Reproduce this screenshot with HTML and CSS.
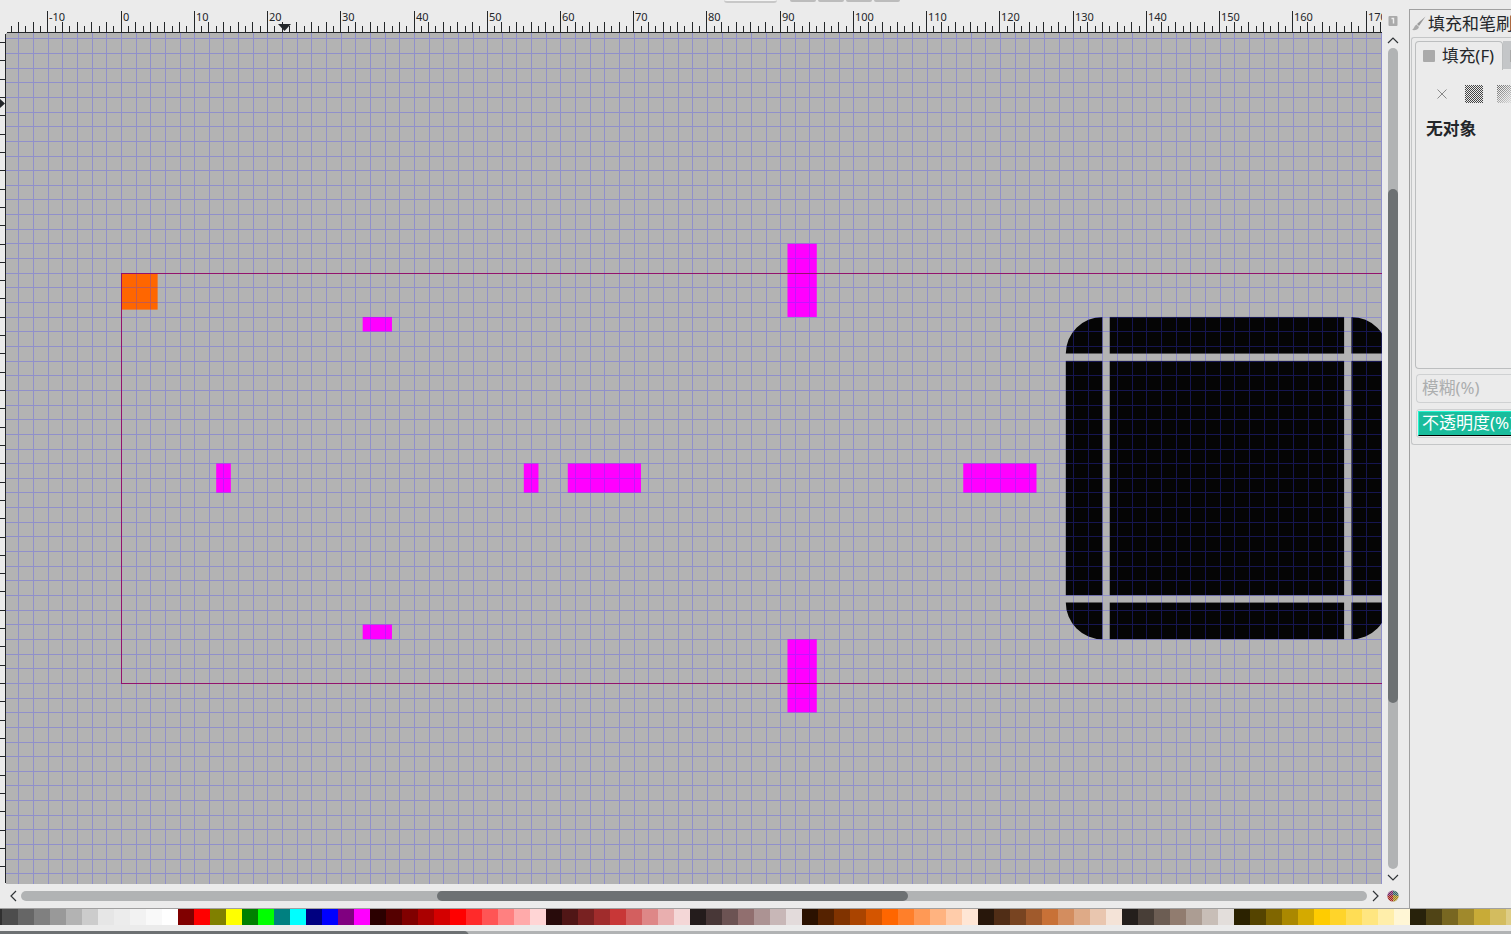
FILE: index.html
```html
<!DOCTYPE html>
<html lang="zh-CN">
<head>
<meta charset="utf-8">
<title>Editor</title>
<link rel="stylesheet" href="styles.css">
</head>
<body>
<div class="app">
  <div class="workspace">
    <main class="editor">
      <div class="toolbar-edge"><i class="entry"></i><i class="btn b1"></i><i class="btn"></i><i class="btn"></i><i class="btn"></i></div>
      <svg class="ruler-top" width="1382" height="24" id="rulerX"></svg>
      <div class="view">
        <svg class="ruler-left" width="6" height="851" id="rulerY"></svg>
        <svg class="canvas" width="1376" height="851" viewBox="6 33 1376 851">
          <rect x="6" y="33" width="1376" height="851" fill="#b3b3b3"/>
          <g id="shapes" transform="translate(121 273) scale(7.324)"></g>
          <path class="page" d="M1382 273.5H121.5V683.5H1382"/>
          <g id="grid" shape-rendering="crispEdges"></g>
        </svg>
      </div>
      <div class="hscroll">
        <svg width="8" height="12" class="arrow"><path d="M7 1L2 6L7 11"/></svg>
        <div class="htrack"><div class="hthumb"></div></div>
        <svg width="8" height="12" class="arrow"><path d="M1 1L6 6L1 11"/></svg>
      </div>
    </main>
    <div class="vscroll">
      <svg class="lock" width="10" height="10"><rect x=".5" y="0" width="9" height="10" rx="1" fill="#aaa"/><path d="M3.5 2.5H5.5V7.5" stroke="#eee" stroke-width="1.4" fill="none"/></svg>
      <svg width="12" height="8" class="arrow"><path d="M1 7L6 2L11 7"/></svg>
      <div class="vtrack"><div class="vthumb"></div></div>
      <svg width="12" height="8" class="arrow"><path d="M1 2L6 7L11 2"/></svg>
      <svg class="cms" width="12" height="12"><defs><clipPath id="disc"><circle cx="6" cy="6" r="5.6"/></clipPath><pattern id="mesh" width="2" height="2" patternUnits="userSpaceOnUse"><path d="M0 0h1v1H0zM1 1h1v1H1z" fill="#fff" opacity=".45"/></pattern></defs><g clip-path="url(#disc)"><path d="M0 0H6V6H0z" fill="#702060"/><path d="M6 0H12V6H6z" fill="#306060"/><path d="M0 6L6 5V12H0z" fill="#a02018"/><path d="M6 5L12 6V12H6z" fill="#a08010"/><path d="M0 0H12V12H0z" fill="url(#mesh)"/></g></svg>
    </div>
    <aside class="dock">
      <div class="dock-title"><svg width="14" height="15"><path d="M13.5 .5L5 8L7 10Z" fill="#999"/><path d="M4.5 8.5L7 11C6 14 3 14.5 0 14C2 13 2 10 4.5 8.5Z" fill="#aaa"/></svg><span>填充和笔刷(F)</span></div>
      <div class="dock-body">
        <div class="tabs"><div class="tab"><i></i><span>填充(F)</span></div><div class="tab-next"><i></i></div></div>
        <div class="panel">
          <div class="paints">
            <svg width="10" height="10"><path d="M.5 .5L9.5 9.5M9.5 .5L.5 9.5" stroke="#888"/></svg>
            <svg width="18" height="18"><defs><pattern id="dots" width="2" height="2" patternUnits="userSpaceOnUse"><path d="M0 0h1v1H0zM1 1h1v1H1z" fill="#444"/></pattern></defs><path d="M0 0H18V18H0z" fill="url(#dots)"/></svg>
            <svg width="18" height="18"><defs><linearGradient id="fade" x2="1" y2="1"><stop stop-color="#ebebeb" stop-opacity=".2"/><stop offset="1" stop-color="#ebebeb"/></linearGradient></defs><path d="M0 0H18V18H0z" fill="url(#dots)"/><path d="M0 0H18V18H0z" fill="url(#fade)"/></svg>
          </div>
          <div class="none">无对象</div>
        </div>
        <div class="slider">模糊(%)</div>
        <div class="slider opacity"><div>不透明度(%)</div></div>
      </div>
    </aside>
  </div>
  <div class="palette" id="palette"></div>
  <div class="palette-scroll"><div></div></div>
</div>
<script src="app.js"></script>
</body>
</html>
```
FILE: styles.css
```css
* { box-sizing: border-box; }
body { margin: 0; background: #ebebeb; color: #232629; font: 16px "Noto Sans", "Noto Sans CJK SC", sans-serif; overflow: hidden; }
svg { display: block; flex: none; }
.app { width: 1511px; height: 934px; overflow: hidden; display: flex; flex-direction: column; }
.workspace { display: flex; border-bottom: 1px solid #a0a0a0; height: 909px; flex: none; }
.editor { width: 1382px; flex: none; }
.toolbar-edge { height: 9px; padding-left: 724px; display: flex; align-items: flex-start; gap: 2px; }
.toolbar-edge i { height: 2px; width: 26px; background: #bcbcbc; border-radius: 0 0 3px 3px; }
.toolbar-edge .entry { width: 53px; height: 3px; background: #f4f4f4; border-bottom: 2px solid #c8c8c8; margin-right: 11px; }
.ruler-top text { font: 11px "Noto Sans", sans-serif; fill: #232629; }
.tick { stroke: #232629; fill: none; shape-rendering: crispEdges; }
.view { display: flex; }
.grid-line { stroke: #3f3fff; stroke-opacity: .3; fill: none; }
.page { fill: none; stroke: #b8002e; shape-rendering: crispEdges; }
.hscroll { height: 24px; display: flex; align-items: center; padding-left: 9px; gap: 4px; }
.arrow path { fill: none; stroke: #303437; stroke-width: 1.2; }
.htrack { width: 1346px; height: 10px; border-radius: 5px; background: #b1b3b4; margin-right: 1px; }
.hthumb { width: 471px; height: 10px; border-radius: 5px; background: #6d7173; margin-left: 416px; }
.vscroll { width: 27px; flex: none; padding: 16px 5px 0 0; display: flex; flex-direction: column; align-items: center; }
.vscroll .lock { margin-bottom: 10px; }
.vtrack { width: 10px; height: 821px; margin: 4px 0; border-radius: 5px; background: #b1b3b4; padding-top: 141px; }
.vthumb { height: 514px; border-radius: 5px; background: #6d7173; }
.cms { margin-top: 9px; }
.dock { width: 102px; flex: none; margin-top: 9px; border-left: 1px solid #a0a0a0; border-top: 1px solid #a0a0a0; padding-left: 1px; overflow: hidden; white-space: nowrap; }
.dock-title { height: 27px; display: flex; align-items: center; gap: 2px; padding-left: 1px; font-size: 17px; }
.dock-title span { margin-bottom: 2px; }
.dock-body { height: 408px; border: 1px solid #c4c6c7; border-right: 0; border-radius: 3px 0 0 3px; padding: 3px 0 0 3px; }
.tabs { display: flex; height: 29px; }
.tab { width: 88px; flex: none; border: 1px solid #bcbebf; border-bottom: 0; border-radius: 4px 4px 0 0; display: flex; align-items: center; padding-left: 7px; font-size: 16.7px; }
.tab span { margin-bottom: 2px; }
.tab i { width: 12px; height: 12px; border-radius: 1px; background: #aaa; margin-right: 7px; }
.tab-next { width: 20px; height: 28px; flex: none; background: #c4c6c8; padding: 9px 0 0 7px; }
.tab-next i { display: block; width: 12px; height: 12px; background: #aaa; }
.panel { height: 299px; border-left: 1px solid #bcbebf; border-bottom: 1px solid #bcbebf; border-radius: 0 0 0 4px; padding-top: 15px; }
.paints { display: flex; align-items: center; padding-left: 21px; gap: 14px; height: 18px; }
.paints svg:first-child { margin-right: 4px; }
.none { font-weight: 700; font-size: 16.8px; line-height: 24px; margin: 14px 0 0 10px; }
.slider { height: 29px; margin-top: 5px; border: 1px solid #cfd1d2; border-right: 0; border-radius: 4px 0 0 4px; color: #acaeaf; padding-left: 5px; line-height: 25px; margin-left: 1px; font-size: 16.8px; }
.opacity { padding: 1px 0 0 1px; margin-top: 6px; }
.opacity div { height: 25px; background: #1abc9c; border: 1px solid #20f5cf; border-right: 0; border-bottom: 1px solid #000; color: #fff; line-height: 21px; padding-left: 3px; font-size: 17px; }
.palette { height: 16px; display: flex; flex: none; background: #303030; padding-left: 2px; }
.palette i { width: 16px; height: 16px; flex: none; }
.palette-scroll { height: 10px; margin-top: 6px; background: #b1b3b4; flex: none; }
.palette-scroll div { width: 469px; height: 10px; border-radius: 0 5px 5px 0; background: #6d7173; }
```
FILE: app.js
```js
const UNIT = 7.325;
const X0 = 121.4;
const Y0 = 273.2;

// Horizontal ruler
let ticks = 'M7 23.5H1382';
let labels = '';
for (let n = -15; n <= 172; n++) {
  const x = Math.floor(121.05 + n * 7.3238) + 0.5;
  const top = n % 10 === 0 ? 2 : n % 2 === 0 ? 13 : 17;
  ticks += `M${x} ${top}V23`;
  if (n % 10 === 0) labels += `<text x="${x + 1.5}" y="12">${n}</text>`;
}
document.getElementById('rulerX').innerHTML =
  `<path class="tick" d="${ticks}"/>${labels}<path d="M278 15H291L284.5 22Z" fill="#232629"/>`;

// Vertical ruler, measured upwards from the page bottom
let side = 'M5.5 1V850';
for (let k = -10; k <= 35; k++) {
  const y = Math.floor(683.5 - k * 2.5 * UNIT) - 33 + 0.5;
  side += `M0 ${y}H5`;
}
document.getElementById('rulerY').innerHTML =
  `<path class="tick" d="${side}"/><path d="M0 66L5 70.5L0 75Z" fill="#232629"/>`;

// Grid, one line every two units
let grid = '';
for (let k = -8; k <= 86; k++) {
  const x = Math.floor(X0 + k * 2 * UNIT) + 0.5;
  if (x > 6 && x < 1382) grid += `M${x} 33V884`;
}
for (let k = -16; k <= 41; k++) grid += `M6 ${Math.floor(Y0 + k * 2 * UNIT) + 0.5}H1382`;
document.getElementById('grid').innerHTML = `<path class="grid-line" d="${grid}"/>`;

// Shapes in page units: x, y, width, height, colour
const shapes = [
  [0, 0, 5, 5, '#ff6600'],
  [33, 6, 4, 2], [33, 48, 4, 2], [13, 26, 2, 4], [55, 26, 2, 4],
  [61, 26, 10, 4], [115, 26, 10, 4], [91, -4, 4, 10], [91, 50, 4, 10],
  [135, 6, 32, 5, '#050505'], [129, 12, 5, 32, '#050505'], [135, 12, 32, 32, '#050505'],
  [168, 12, 5, 32, '#050505'], [135, 45, 32, 5, '#050505']
];
const corners = 'M129 11A5 5 0 0 1 134 6V11ZM129 45H134V50A5 5 0 0 1 129 45ZM168 6A5 5 0 0 1 173 11H168ZM168 45H173A5 5 0 0 1 168 50Z';
document.getElementById('shapes').innerHTML =
  shapes.map(([x, y, w, h, c]) => `<rect x="${x}" y="${y}" width="${w}" height="${h}" fill="${c || '#f0f'}"/>`).join('') +
  `<path d="${corners}" fill="#050505"/>`;

// Swatches
const colours = `4d4d4d 666666 808080 999999 b3b3b3 cccccc e6e6e6 ececec f2f2f2 f9f9f9 ffffff
800000 ff0000 808000 ffff00 008000 00ff00 008080 00ffff 000080 0000ff 800080 ff00ff
2b0000 550000 800000 aa0000 d40000 ff0000 ff2a2a ff5555 ff8080 ffaaaa ffd5d5
280b0b 501616 782121 a02c2c c83737 d35f5f de8787 e9afaf f4d7d7
241c1c 483737 6c5353 916f6f ac9393 c8b7b7 e3dbdb
2b1100 552200 803300 aa4400 d45500 ff6600 ff7f2a ff9955 ffb380 ffccaa ffe6d5
28170b 502d16 784421 a05a2c c87137 d38d5f deaa87 e9c6af f4e3d7
241f1c 483e37 6c5d53 917c6f ac9d93 c8beb7 e3dedb
2b2200 554400 806600 aa8800 d4aa00 ffcc00 ffd42a ffdd55 ffe680 ffeeaa fff6d5
28220b 504416 786721 a0892c c8ab37 d3bc5f decd87`.split(/\s+/);
document.getElementById('palette').innerHTML =
  colours.map(c => `<i style="background:#${c}"></i>`).join('');
```
